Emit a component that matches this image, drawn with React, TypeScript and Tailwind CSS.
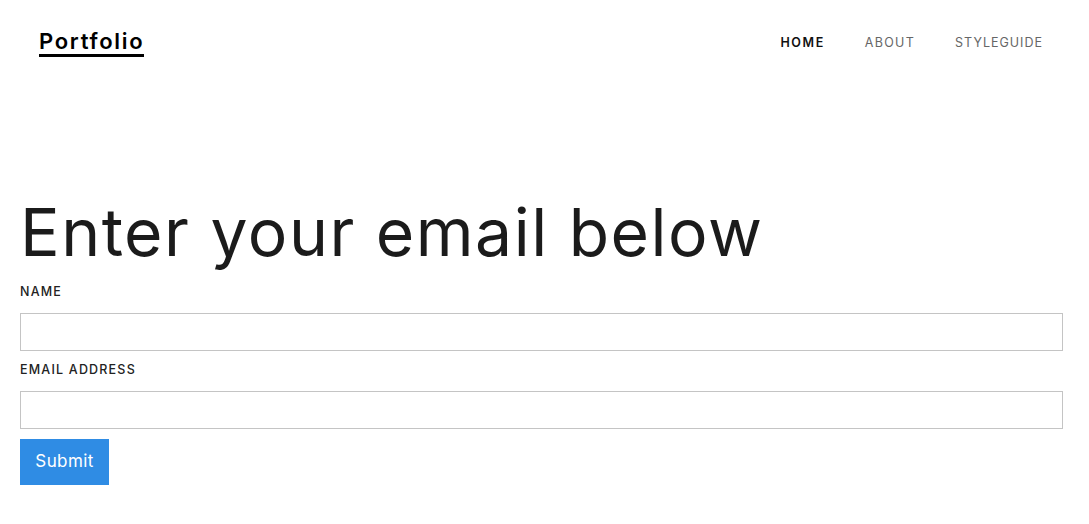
import { useState, FormEvent } from "react";

function App() {
  const [name, setName] = useState("");
  const [email, setEmail] = useState("");

  const handleSubmit = (e: FormEvent<HTMLFormElement>) => {
    e.preventDefault();
  };

  return (
    <div className="min-h-screen bg-white font-['Inter',sans-serif] text-[#1a1a1a]">
      {/* header */}
      <header className="flex items-center justify-between pl-[39px] pr-[46px] pt-[29px]">
        <a href="#" className="text-[22px] font-semibold leading-[25px] tracking-[1.7px] text-black border-b-[3px] border-black">
          Portfolio
        </a>
        <nav className="flex gap-[40px] text-[12.5px] tracking-[1.3px] uppercase pt-[1px]">
          <a href="#" className="font-semibold text-[#111] tracking-[1.6px]">Home</a>
          <a href="#" className="text-[#666]">About</a>
          <a href="#" className="text-[#666] tracking-[1px]">Styleguide</a>
        </nav>
      </header>

      <main className="px-5 pt-[135px]">
        <h1 className="text-[66px] leading-[80px] font-normal tracking-[1.5px] text-[#1b1b1b]">
          Enter your email below
        </h1>
        <form onSubmit={handleSubmit} className="flex flex-col w-[1043px]">
          <label className="text-[12.5px] font-medium tracking-[1.2px] uppercase text-[#222] mt-[10px] leading-[20px]">
            Name
          </label>
          <input
            type="text"
            value={name}
            onChange={(e) => setName(e.target.value)}
            className="mt-[11px] h-[38px] border border-[#c4c4c4] px-3 outline-none"
          />
          <label className="text-[12.5px] font-medium tracking-[1.2px] uppercase text-[#222] mt-[9px] leading-[20px]">
            Email Address
          </label>
          <input
            type="email"
            value={email}
            onChange={(e) => setEmail(e.target.value)}
            className="mt-[11px] h-[38px] border border-[#c4c4c4] px-3 outline-none"
          />
          <div className="mt-[10px]">
            <button type="submit" className="bg-[#2f8ce4] text-white text-[17px] tracking-[0.4px] h-[46px] w-[89px]">
              Submit
            </button>
          </div>
        </form>
      </main>
    </div>
  );
}

export default App;
